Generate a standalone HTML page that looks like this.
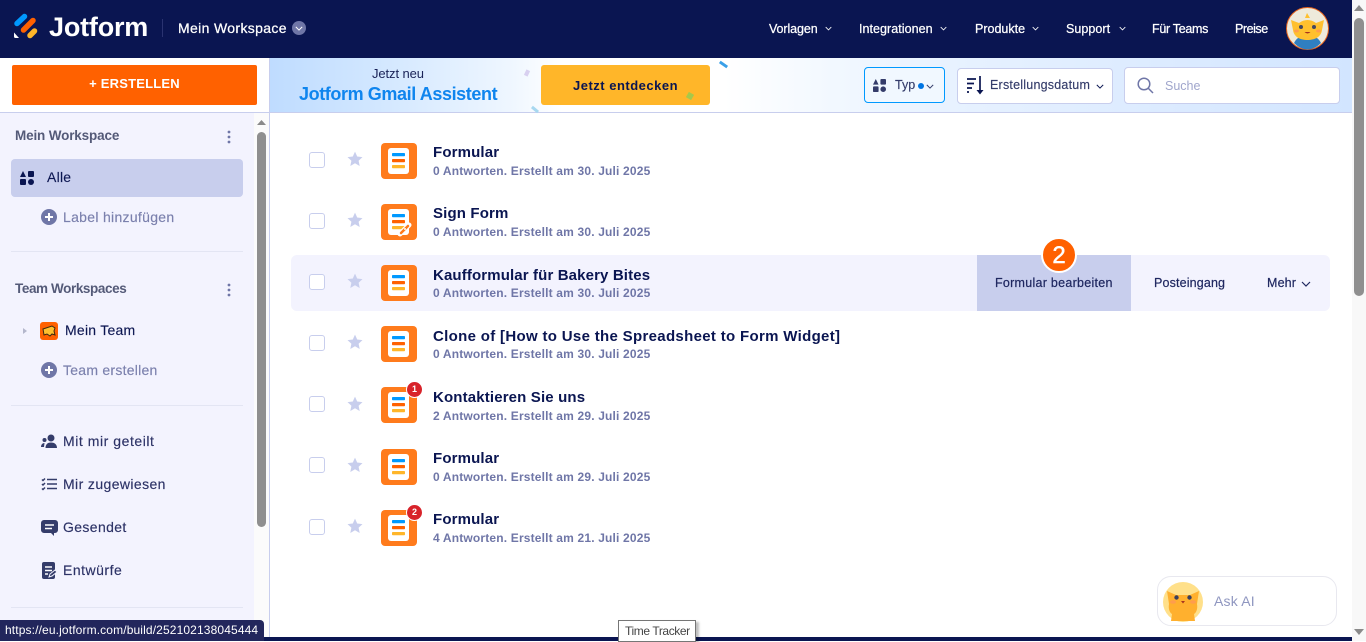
<!DOCTYPE html>
<html lang="de"><head><meta charset="utf-8"><title>Jotform</title>
<style>
html,body{margin:0;padding:0;width:1366px;height:641px;overflow:hidden;background:#fff;font-family:"Liberation Sans",sans-serif;color:#0a1551}
.a,.t,svg.a{position:absolute}
.t{white-space:nowrap;height:20px;line-height:20px}
.nav{color:#fff;font-size:12.5px;-webkit-text-stroke:.25px #fff;letter-spacing:-.1px}
.side{font-size:14px;color:#2c3266;-webkit-text-stroke:.15px #2c3266;letter-spacing:.25px}
.mut{color:#7b80ad;-webkit-text-stroke:.15px #7b80ad}
.head{font-size:13.5px;font-weight:bold;color:#545a78;letter-spacing:-.15px}
.title{font-size:15px;font-weight:bold;color:#0a1551;left:433px;letter-spacing:.15px}
.sub{font-size:12px;font-weight:bold;color:#6f76a7;left:433px;letter-spacing:.17px}
.cb{left:309px;width:14px;height:14px;border:1.5px solid #c8ceed;border-radius:3px;background:#fff}
.div{left:11px;width:232px;height:1px;background:#e3e5f3}
.badge{width:15px;height:15px;background:#d8232a;border-radius:50%;color:#fff;font-size:9px;font-weight:bold;text-align:center;line-height:15px;left:407px;box-shadow:0 0 0 1px #fff}
</style></head><body>
<svg width="0" height="0" style="position:absolute"><defs>
<symbol id="star" viewBox="0 0 16 16"><path d="M8 .6l2.2 4.9 5.3.6-3.9 3.6 1.1 5.3L8 12.3l-4.7 2.7 1.1-5.3L.5 6.1l5.3-.6z" fill="#c8ceed"/></symbol>
<symbol id="form" viewBox="0 0 36 36"><rect width="36" height="36" rx="4" fill="#ff7b1c"/><rect x="7" y="5" width="21" height="26" rx="3" fill="#fff"/><rect x="11" y="10" width="13" height="3.2" rx=".8" fill="#0099ff"/><rect x="11" y="16" width="13" height="3.2" rx=".8" fill="#ff6100"/><rect x="11" y="22" width="13" height="3.2" rx=".8" fill="#ffb629"/></symbol>
<symbol id="dots" viewBox="0 0 4 14"><circle cx="2" cy="2" r="1.4" fill="#6f76a7"/><circle cx="2" cy="7" r="1.4" fill="#6f76a7"/><circle cx="2" cy="12" r="1.4" fill="#6f76a7"/></symbol>
<symbol id="plus" viewBox="0 0 16 16"><circle cx="8" cy="8" r="8" fill="#6f76a7"/><path d="M8 4v8M4 8h8" stroke="#fff" stroke-width="2"/></symbol>
<symbol id="chev" viewBox="0 0 10 6"><path d="M1 1l4 4 4-4" fill="none" stroke="currentColor" stroke-width="1.2"/></symbol>
<symbol id="shapes" viewBox="0 0 14 14"><path d="M3 0l3 6H0z" fill="currentColor"/><rect x="8" y="0" width="6" height="6" rx="1" fill="currentColor"/><rect x="0" y="8" width="6" height="6" rx="1" fill="currentColor"/><circle cx="11" cy="11" r="3" fill="currentColor"/></symbol>
<symbol id="cat" viewBox="0 0 40 40"><circle cx="20" cy="20" r="20" fill="#ffe08a"/><path d="M4 9l9 4h14l9-4-2 13c1 5-1 9-3 10l1 7H8l1-7c-2-1-4-5-3-10z" fill="#ffb02e"/><circle cx="13.500" cy="15.500" r="2.200" fill="#3a3f5c"/><circle cx="26.500" cy="15.500" r="2.200" fill="#3a3f5c"/><path d="M18 19h4l-2 2.500z" fill="#a8341f"/><ellipse cx="10" cy="20" rx="3" ry="1.800" fill="#ff9d4d"/><ellipse cx="30" cy="20" rx="3" ry="1.800" fill="#ff9d4d"/></symbol>
</defs></svg>

<!-- header -->
<div class="a" style="left:0;top:0;width:1352px;height:58px;background:#0a1551"></div>
<svg class="a" style="left:13px;top:12px" width="25" height="27" viewBox="0 0 25 27"><path d="M4 11.500L11.500 4.500" stroke="#0099ff" stroke-width="5.500" stroke-linecap="round"/><path d="M10.500 18L20 8.500" stroke="#ff6100" stroke-width="5.500" stroke-linecap="round"/><path d="M17 23.500L21.500 19" stroke="#ffb629" stroke-width="5.500" stroke-linecap="round"/><path d="M1 20.500l5 5.500H2.500C1.500 26 1 25.500 1 24.500z" fill="#fff"/></svg>
<div class="t" style="left:49px;top:17px;color:#fff;font-size:27px;font-weight:bold;letter-spacing:-.2px">Jotform</div>
<div class="a" style="left:162px;top:19px;width:1px;height:18px;background:#2a3370"></div>
<div class="t" style="left:178px;top:18px;color:#fff;font-size:14px;-webkit-text-stroke:.25px #fff;letter-spacing:.35px">Mein Workspace</div>
<div class="a" style="left:292px;top:21px;width:14px;height:14px;border-radius:50%;background:#6f76a7"></div>
<svg class="a" style="left:295px;top:26px;color:#fff" width="8" height="5"><use href="#chev"/></svg>
<div class="t nav" style="left:769px;top:19px">Vorlagen</div><svg class="a" style="left:825px;top:26px;color:#fff" width="7" height="5"><use href="#chev"/></svg>
<div class="t nav" style="left:859px;top:19px;letter-spacing:.05px">Integrationen</div><svg class="a" style="left:940px;top:26px;color:#fff" width="7" height="5"><use href="#chev"/></svg>
<div class="t nav" style="left:975px;top:19px;letter-spacing:0">Produkte</div><svg class="a" style="left:1032px;top:26px;color:#fff" width="7" height="5"><use href="#chev"/></svg>
<div class="t nav" style="left:1066px;top:19px;letter-spacing:.05px">Support</div><svg class="a" style="left:1119px;top:26px;color:#fff" width="7" height="5"><use href="#chev"/></svg>
<div class="t nav" style="left:1152px;top:19px;letter-spacing:-.3px">Für Teams</div>
<div class="t nav" style="left:1235px;top:19px;letter-spacing:-.45px">Preise</div>
<svg class="a" style="left:1286px;top:7px" width="43" height="43" viewBox="0 0 43 43"><circle cx="21.500" cy="21.500" r="21" fill="#eeeadb" stroke="#e8641c" stroke-width="1"/><path d="M8 36c3-6 8-8 13.500-8S32 30 35 36c-4 4-9 6.500-13.500 6.500S12 40 8 36z" fill="#2f7fc1"/><path d="M5 13l8 3c5-4 12-4 17 0l8-3-2 10c-1 7-7 10-14.500 10S8 30 7 23z" fill="#ffc02e"/><path d="M21 6l3 5h-5z" fill="#ffc02e"/><circle cx="15" cy="20" r="2" fill="#44475e"/><circle cx="28" cy="20" r="2" fill="#44475e"/><path d="M18.500 25q3 3 6 0" fill="#a8341f"/><ellipse cx="10.500" cy="24" rx="2.500" ry="1.500" fill="#ff9d4d"/><ellipse cx="32.500" cy="24" rx="2.500" ry="1.500" fill="#ff9d4d"/></svg>

<!-- page scrollbar -->
<div class="a" style="left:1352px;top:0;width:14px;height:641px;background:#f8f8f8"></div>
<svg class="a" style="left:1354px;top:5px" width="10" height="6"><path d="M5 0l5 6H0z" fill="#8a8a8a"/></svg>
<div class="a" style="left:1354px;top:18px;width:10px;height:278px;background:#8f8f8f;border-radius:5px"></div>
<svg class="a" style="left:1354px;top:629px" width="10" height="6"><path d="M0 0h10L5 6z" fill="#8a8a8a"/></svg>
<div class="a" style="left:0;top:637px;width:1352px;height:4px;background:#0a1551"></div>

<!-- sidebar -->
<div class="a" style="left:0;top:113px;width:254px;height:528px;background:#f3f3fe"></div>
<div class="a" style="left:0;top:112px;width:269px;height:1px;background:#c8ceed"></div>
<div class="a" style="left:254px;top:113px;width:15px;height:524px;background:#fbfbfb"></div>
<div class="a" style="left:269px;top:58px;width:1px;height:579px;background:#c8ceed"></div>
<svg class="a" style="left:257px;top:120px" width="9" height="5"><path d="M4.500 0l4.500 5H0z" fill="#8a8a8a"/></svg>
<div class="a" style="left:257px;top:132px;width:9px;height:395px;background:#8f8f8f;border-radius:4.500px"></div>
<div class="a" style="left:12px;top:65px;width:245px;height:40px;background:#ff6100;border-radius:2px"></div>
<div class="t" style="left:12px;top:74px;width:245px;text-align:center;color:#fff;font-size:13px;font-weight:bold;letter-spacing:.2px">+ ERSTELLEN</div>

<div class="t head" style="left:15px;top:126px">Mein Workspace</div>
<svg class="a" style="left:227px;top:130px" width="4" height="14"><use href="#dots"/></svg>
<div class="a" style="left:11px;top:159px;width:232px;height:38px;background:#c8ceed;border-radius:4px"></div>
<svg class="a" style="left:20px;top:171px;color:#0a1551" width="14" height="14"><use href="#shapes"/></svg>
<div class="t side" style="left:47px;top:167px;color:#0a1551">Alle</div>
<svg class="a" style="left:41px;top:209px" width="16" height="16"><use href="#plus"/></svg>
<div class="t side mut" style="left:63px;top:207px;letter-spacing:.3px">Label hinzufügen</div>
<div class="a div" style="top:251px"></div>
<div class="t head" style="left:15px;top:279px;letter-spacing:-.4px">Team Workspaces</div>
<svg class="a" style="left:227px;top:283px" width="4" height="14"><use href="#dots"/></svg>
<svg class="a" style="left:23px;top:328px" width="4" height="6"><path d="M0 0l4 3-4 3z" fill="#b4b7cc"/></svg>
<svg class="a" style="left:40px;top:322px" width="18" height="18" viewBox="0 0 18 18"><rect width="18" height="18" rx="3" fill="#ff6100"/><path d="M3 7l9-3 3 2-1 3 1 4-3-1-2 2-3-2-3 1z" fill="#ffc02e" stroke="#3a2a10" stroke-width="1"/></svg>
<div class="t side" style="left:65px;top:320px;color:#0a1551">Mein Team</div>
<svg class="a" style="left:41px;top:362px" width="16" height="16"><use href="#plus"/></svg>
<div class="t side mut" style="left:63px;top:360px">Team erstellen</div>
<div class="a div" style="top:405px"></div>
<svg class="a" style="left:41px;top:433px" width="16" height="16" viewBox="0 0 16 16"><circle cx="10" cy="5" r="3.500" fill="#343c6a"/><path d="M4.500 15c0-4 2.500-5.500 5.500-5.500s6 1.500 6 5.500z" fill="#343c6a"/><circle cx="3.500" cy="7" r="2" fill="#343c6a"/><path d="M0 14c0-2.500 1.500-4 3.500-4l-.5 4z" fill="#343c6a"/></svg>
<div class="t side" style="left:63px;top:431px;letter-spacing:.55px">Mit mir geteilt</div>
<svg class="a" style="left:41px;top:477px" width="16" height="14" viewBox="0 0 16 14" fill="none" stroke="#343c6a" stroke-width="1.500"><path d="M6 2.500h10M6 7h10M6 11.500h10M1 2.500l1 1 2-2M1 7l1 1 2-2M1 11.500l1 1 2-2"/></svg>
<div class="t side" style="left:63px;top:474px;letter-spacing:.4px">Mir zugewiesen</div>
<svg class="a" style="left:41px;top:520px" width="17" height="16" viewBox="0 0 17 16"><path d="M3 0h11a3 3 0 013 3v7a3 3 0 01-3 3h-1v3l-3-3H3a3 3 0 01-3-3V3a3 3 0 013-3z" fill="#343c6a"/><path d="M4 5h9M4 8.500h7" stroke="#fff" stroke-width="1.500"/></svg>
<div class="t side" style="left:63px;top:517px;letter-spacing:.37px">Gesendet</div>
<svg class="a" style="left:42px;top:562px" width="15" height="17" viewBox="0 0 15 17"><rect width="13" height="17" rx="2" fill="#343c6a"/><path d="M3 5h7M3 8.500h7M3 12h3" stroke="#fff" stroke-width="1.400"/><path d="M7 15l1-3 5-4 2 2-5 4z" fill="#343c6a" stroke="#f3f3fe"/></svg>
<div class="t side" style="left:63px;top:560px;letter-spacing:.5px">Entwürfe</div>
<div class="a div" style="top:607px"></div>

<!-- banner -->
<div class="a" style="left:270px;top:58px;width:1082px;height:54px;background:linear-gradient(90deg,#bfdcff 0,#d2e7ff 10%,#eef6ff 22%,#fff 27%,#fff 42%,#f2f8ff 52%,#e6f1ff 65%,#d2e5ff 100%)"></div>
<div class="a" style="left:270px;top:112px;width:1082px;height:1px;background:#c8ceed"></div>
<div class="t" style="left:372px;top:64px;font-size:13px;letter-spacing:-.1px;color:#1a2358">Jetzt neu</div>
<div class="t" style="left:299px;top:84px;font-size:18px;font-weight:bold;color:#0f85ee;letter-spacing:-.4px">Jotform Gmail Assistent</div>
<div class="a" style="left:541px;top:65px;width:169px;height:40px;background:#ffb629;border-radius:3px"></div>
<div class="t" style="left:573px;top:76px;font-size:13px;font-weight:bold;color:#0a1551;letter-spacing:.5px">Jetzt entdecken</div>
<div class="a" style="left:719px;top:63px;width:9px;height:3px;background:#3aa0e8;transform:rotate(35deg)"></div>
<div class="a" style="left:531px;top:108px;width:8px;height:3px;background:#a8d8f0;transform:rotate(40deg)"></div>
<div class="a" style="left:525px;top:70px;width:4px;height:6px;background:#d8d0f0;transform:rotate(25deg)"></div>
<div class="a" style="left:687px;top:93px;width:6px;height:6px;background:#a6c84a;transform:rotate(30deg)"></div>

<div class="a" style="left:864px;top:67px;width:79px;height:34px;background:#f1f8ff;border:1px solid #0099ff;border-radius:4px"></div>
<svg class="a" style="left:873px;top:79px;color:#343c6a" width="13" height="13"><use href="#shapes"/></svg>
<div class="t" style="left:895px;top:75px;font-size:12.5px;color:#343c6a;-webkit-text-stroke:.15px #343c6a">Typ</div>
<div class="a" style="left:918px;top:83px;width:6px;height:6px;border-radius:50%;background:#0075e3"></div>
<svg class="a" style="left:926px;top:84px;color:#343c6a" width="8" height="5"><use href="#chev"/></svg>
<div class="a" style="left:957px;top:68px;width:154px;height:34px;background:#fff;border:1px solid #c8ceed;border-radius:4px"></div>
<svg class="a" style="left:967px;top:76px" width="17" height="19" viewBox="0 0 17 19" fill="none" stroke="#0a1551" stroke-width="1.700"><path d="M0 3h9M0 7.500h7M0 12h5M0 16h2M13 0v16"/><path d="M9.500 14h7L13 18.500z" fill="#0a1551" stroke="none"/></svg>
<div class="t" style="left:990px;top:75px;font-size:12.5px;color:#343c6a;-webkit-text-stroke:.15px #343c6a;letter-spacing:.22px">Erstellungsdatum</div>
<svg class="a" style="left:1096px;top:84px;color:#0a1551" width="8" height="5"><use href="#chev"/></svg>
<div class="a" style="left:1124px;top:67px;width:214px;height:35px;background:#fff;border:1px solid #c8ceed;border-radius:4px"></div>
<svg class="a" style="left:1137px;top:77px" width="17" height="17" viewBox="0 0 17 17" fill="none" stroke="#6f76a7" stroke-width="1.500"><circle cx="7" cy="7" r="5.800"/><path d="M11 11l5 5"/></svg>
<div class="t" style="left:1165px;top:76px;font-size:12.500px;color:#a0a6cc">Suche</div>

<!-- highlighted row -->
<div class="a" style="left:291px;top:255px;width:1039px;height:56px;background:#f3f3fe;border-radius:6px"></div>
<div class="a" style="left:977px;top:255px;width:154px;height:56px;background:#c8ceed"></div>
<div class="a" style="left:1041px;top:237px;width:32px;height:32px;border:2px solid #fff;border-radius:50%;background:#ff6100;color:#fff;font-size:24px;text-align:center;line-height:33px;-webkit-text-stroke:.5px #fff">2</div>
<div class="t" style="left:995px;top:273px;font-size:12.500px;color:#1f2760;-webkit-text-stroke:.2px #1f2760;letter-spacing:.27px">Formular bearbeiten</div>
<div class="t" style="left:1154px;top:273px;font-size:12.500px;color:#1f2760;-webkit-text-stroke:.2px #1f2760;letter-spacing:.15px">Posteingang</div>
<div class="t" style="left:1267px;top:273px;font-size:12.500px;color:#1f2760;-webkit-text-stroke:.2px #1f2760;letter-spacing:.15px">Mehr</div>
<svg class="a" style="left:1301px;top:281px;color:#1f2760" width="10" height="6"><use href="#chev"/></svg>

<!-- rows -->
<div class="a cb" style="top:152px"></div><svg class="a" style="left:347px;top:151px" width="16" height="16"><use href="#star"/></svg><svg class="a" style="left:381px;top:143px" width="36" height="36"><use href="#form"/></svg>
<div class="t title" style="top:143px">Formular</div><div class="t sub" style="top:161px">0 Antworten. Erstellt am 30. Juli 2025</div>

<div class="a cb" style="top:213px"></div><svg class="a" style="left:347px;top:212px" width="16" height="16"><use href="#star"/></svg><svg class="a" style="left:381px;top:204px" width="36" height="36"><use href="#form"/></svg>
<svg class="a" style="left:397px;top:221px" width="16" height="16" viewBox="0 0 16 16"><path d="M3 13L12 4" stroke="#fff" stroke-width="5" stroke-linecap="round"/><path d="M4 12L11 5" stroke="#ff7b1c" stroke-width="2.500" stroke-linecap="round"/><circle cx="8" cy="8" r="1" fill="#fff"/></svg>
<div class="t title" style="top:204px">Sign Form</div><div class="t sub" style="top:222px">0 Antworten. Erstellt am 30. Juli 2025</div>

<div class="a cb" style="top:274px"></div><svg class="a" style="left:347px;top:273px" width="16" height="16"><use href="#star"/></svg><svg class="a" style="left:381px;top:265px" width="36" height="36"><use href="#form"/></svg>
<div class="t title" style="top:266px;letter-spacing:.13px">Kaufformular für Bakery Bites</div><div class="t sub" style="top:283px">0 Antworten. Erstellt am 30. Juli 2025</div>

<div class="a cb" style="top:335px"></div><svg class="a" style="left:347px;top:334px" width="16" height="16"><use href="#star"/></svg><svg class="a" style="left:381px;top:326px" width="36" height="36"><use href="#form"/></svg>
<div class="t title" style="top:327px;letter-spacing:.32px">Clone of [How to Use the Spreadsheet to Form Widget]</div><div class="t sub" style="top:344px">0 Antworten. Erstellt am 30. Juli 2025</div>

<div class="a cb" style="top:396px"></div><svg class="a" style="left:347px;top:396px" width="16" height="16"><use href="#star"/></svg><svg class="a" style="left:381px;top:387px" width="36" height="36"><use href="#form"/></svg>
<div class="a badge" style="top:382px">1</div>
<div class="t title" style="top:388px">Kontaktieren Sie uns</div><div class="t sub" style="top:406px">2 Antworten. Erstellt am 29. Juli 2025</div>

<div class="a cb" style="top:457px"></div><svg class="a" style="left:347px;top:457px" width="16" height="16"><use href="#star"/></svg><svg class="a" style="left:381px;top:449px" width="36" height="36"><use href="#form"/></svg>
<div class="t title" style="top:449px">Formular</div><div class="t sub" style="top:467px">0 Antworten. Erstellt am 29. Juli 2025</div>

<div class="a cb" style="top:519px"></div><svg class="a" style="left:347px;top:518px" width="16" height="16"><use href="#star"/></svg><svg class="a" style="left:381px;top:510px" width="36" height="36"><use href="#form"/></svg>
<div class="a badge" style="top:505px">2</div>
<div class="t title" style="top:510px">Formular</div><div class="t sub" style="top:528px">4 Antworten. Erstellt am 21. Juli 2025</div>

<!-- Ask AI -->
<div class="a" style="left:1157px;top:576px;width:178px;height:48px;background:#fff;border:1px solid #e8e8ef;border-radius:14px"></div>
<svg class="a" style="left:1163px;top:582px" width="40" height="40"><use href="#cat"/></svg>
<div class="t" style="left:1214px;top:591px;font-size:14px;color:#8f96c0;letter-spacing:.2px">Ask AI</div>

<!-- status + tooltip -->
<div class="a" style="left:0;top:620px;width:264px;height:21px;background:#22265c;border-top-right-radius:4px"></div>
<div class="t" style="left:5px;top:620px;color:#fff;font-size:12px;letter-spacing:.13px">https://eu.jotform.com/build/252102138045444</div>
<div class="a" style="left:618px;top:620px;width:76px;height:20px;background:#fff;border:1px solid #767676;box-shadow:3px 2px 2px rgba(0,0,0,.25)"></div>
<div class="t" style="left:625px;top:621px;font-size:12px;color:#444;letter-spacing:-.4px">Time Tracker</div>
</body></html>
